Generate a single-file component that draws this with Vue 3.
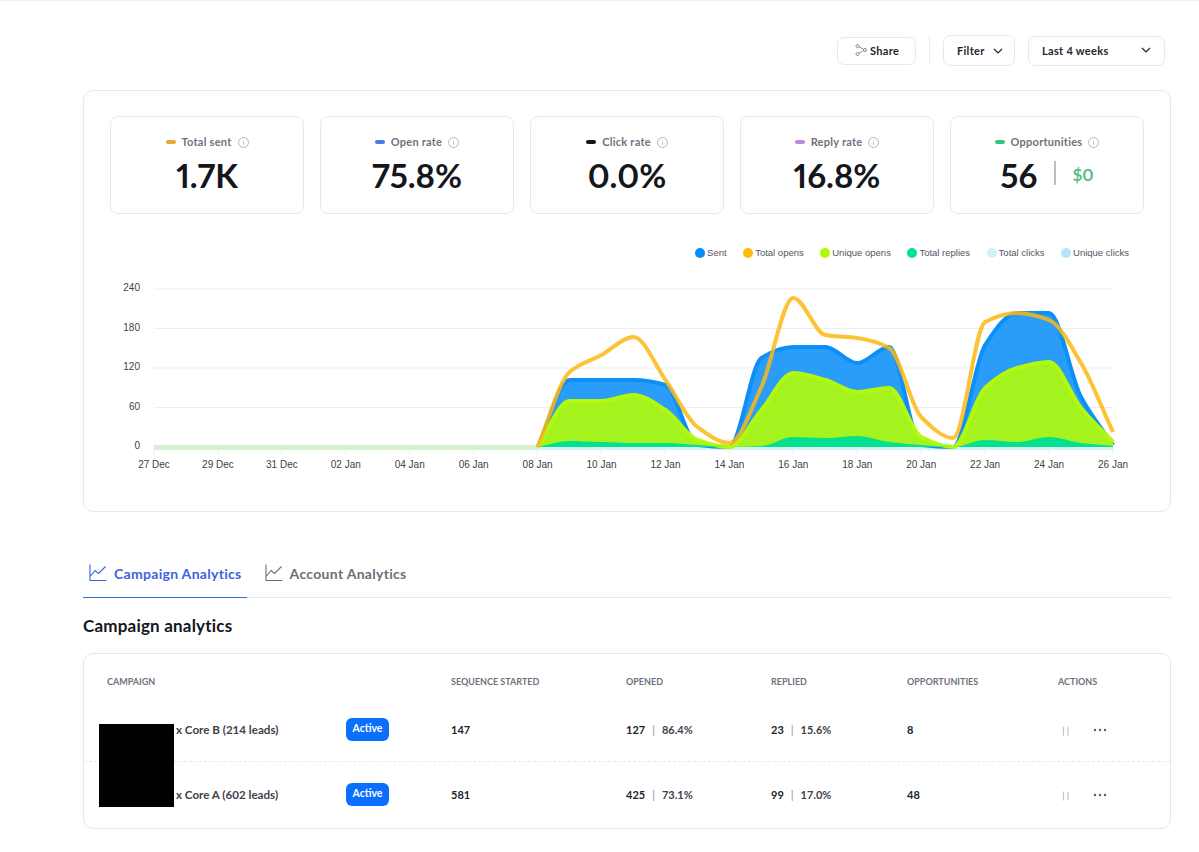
<script setup>
const stats = [
  { label: 'Total sent', value: '1.7K', color: '#e5a93f' },
  { label: 'Open rate', value: '75.8%', color: '#4a7be8' },
  { label: 'Click rate', value: '0.0%', color: '#14161c' },
  { label: 'Reply rate', value: '16.8%', color: '#b98bdc' },
  { label: 'Opportunities', value: '56', color: '#2fc77b', extra: '$0' },
]
const legend = [
  { label: 'Sent', color: '#008ffb' },
  { label: 'Total opens', color: '#feb90f' },
  { label: 'Unique opens', color: '#b0f708' },
  { label: 'Total replies', color: '#00e396' },
  { label: 'Total clicks', color: '#d4f1f9' },
  { label: 'Unique clicks', color: '#b2e8f6' },
]
const rows = [
  { name: 'x Core B (214 leads)', started: '147', opened: '127', openedPct: '86.4%', replied: '23', repliedPct: '15.6%', opp: '8' },
  { name: 'x Core A (602 leads)', started: '581', opened: '425', openedPct: '73.1%', replied: '99', repliedPct: '17.0%', opp: '48' },
]
const x0 = 154
const dx = 959 / 30
const base = 447
const xAt = (d) => x0 + d * dx
const pad = (arr) => arr.map((y, i) => [xAt(i + 12), y])
const sent = pad([447, 380, 380, 380, 385, 445, 447, 358, 347, 347, 363, 347, 445, 447, 345, 313, 313, 397, 445])
const opens = pad([447, 372, 355, 337, 380, 427, 443, 387, 298, 335, 338, 348, 417, 438, 322, 313, 320, 363, 432])
const unique = pad([447, 401, 401, 395, 410, 440, 447, 410, 373, 380, 392, 388, 437, 447, 388, 368, 362, 408, 442])
const replies = pad([447, 441, 442, 443, 443, 445, 447, 446, 437, 438, 436, 442, 445, 447, 440, 442, 437, 443, 446])
// monotone cubic: never overshoots the data
function curve(pts) {
  const n = pts.length
  const s = []
  for (let i = 0; i < n - 1; i++) s.push((pts[i + 1][1] - pts[i][1]) / (pts[i + 1][0] - pts[i][0]))
  const m = pts.map((_, i) => {
    if (i === 0) return s[0]
    if (i === n - 1) return s[n - 2]
    if (s[i - 1] * s[i] <= 0) return 0
    return (2 * s[i - 1] * s[i]) / (s[i - 1] + s[i])
  })
  let d = `M${pts[0][0].toFixed(1)} ${pts[0][1]}`
  for (let i = 0; i < n - 1; i++) {
    const h = (pts[i + 1][0] - pts[i][0]) / 3
    d += `C${(pts[i][0] + h).toFixed(1)} ${(pts[i][1] + m[i] * h).toFixed(1)} ${(pts[i + 1][0] - h).toFixed(1)} ${(pts[i + 1][1] - m[i + 1] * h).toFixed(1)} ${pts[i + 1][0].toFixed(1)} ${pts[i + 1][1]}`
  }
  return d
}
const area = (pts) => `${curve(pts)}L${pts[pts.length - 1][0].toFixed(1)} ${base}L${pts[0][0].toFixed(1)} ${base}Z`
const series = {
  sentLine: curve(sent), sentArea: area(sent),
  uniqueLine: curve(unique), uniqueArea: area(unique),
  repliesArea: area(replies), opensLine: curve(opens),
}
const xLabels = ['27 Dec', '29 Dec', '31 Dec', '02 Jan', '04 Jan', '06 Jan', '08 Jan', '10 Jan', '12 Jan', '14 Jan', '16 Jan', '18 Jan', '20 Jan', '22 Jan', '24 Jan', '26 Jan']
  .map((t, i) => ({ t, x: xAt(i * 2) }))
const yLabels = [['240', 289], ['180', 328.5], ['120', 368], ['60', 407.5], ['0', 447]]
</script>

<template>
  <div class="page">
    <header class="topbar">
      <button class="btn share">
        <svg viewBox="0 0 12 12" width="12" height="12" fill="none" stroke="#6b6f7b" stroke-width=".8">
          <circle cx="2.500" cy="2" r="1.500" /><circle cx="2.500" cy="10" r="1.500" /><circle cx="10" cy="6" r="1.500" />
          <path d="M4 2.800 8.600 5.300M4 9.200 8.600 6.700" />
        </svg>
        Share
      </button>
      <span class="vline"></span>
      <button class="btn filter">
        Filter
        <svg viewBox="0 0 10 6" width="10" height="6" fill="none" stroke="#23252d" stroke-width="1.2"><path d="M1 1l4 4 4-4" /></svg>
      </button>
      <button class="btn range">
        Last 4 weeks
        <svg viewBox="0 0 10 6" width="10" height="6" fill="none" stroke="#23252d" stroke-width="1.2"><path d="M1 1l4 4 4-4" /></svg>
      </button>
    </header>

    <section class="overview">
      <div class="stats">
        <div v-for="s in stats" :key="s.label" class="stat">
          <div class="stat-label">
            <i class="pill" :style="{ background: s.color }"></i>
            <span>{{ s.label }}</span>
            <svg viewBox="0 0 12 12" width="11" height="11" fill="none" stroke="#9a9da6" stroke-width=".8">
              <circle cx="6" cy="6" r="5.400" /><path d="M6 5.400v3M6 3.400v.8" />
            </svg>
          </div>
          <div class="stat-value">
            <span>{{ s.value }}</span>
            <template v-if="s.extra">
              <i class="sep"></i>
              <span class="extra">{{ s.extra }}</span>
            </template>
          </div>
        </div>
      </div>

      <div class="legend">
        <span v-for="l in legend" :key="l.label" class="legend-item">
          <i :style="{ background: l.color }"></i>{{ l.label }}
        </span>
      </div>

      <svg class="chart" viewBox="84 260 1086 251" width="1086" height="251">
        <g stroke="#ecedf0" stroke-width="1">
          <line v-for="y in yLabels" :key="y[0]" :x1="x0" x2="1113" :y1="y[1]" :y2="y[1]" />
          <line v-for="l in xLabels" :key="l.t" :x1="l.x" :x2="l.x" y1="447" y2="455" />
        </g>
        <text v-for="y in yLabels" :key="y[0]" x="140" :y="y[1] + 2" text-anchor="end" class="axis">{{ y[0] }}</text>
        <text v-for="l in xLabels" :key="l.t" :x="l.x" y="468" text-anchor="middle" class="axis">{{ l.t }}</text>
        <rect x="154" y="445" width="384" height="5" fill="#d8efd2" />
        <rect x="538" y="447" width="575" height="3" fill="#d2f2f7" />
        <path :d="series.sentArea" fill="#2a9dfb" />
        <path :d="series.sentLine" fill="none" stroke="#0c90f8" stroke-width="4" />
        <path :d="series.uniqueArea" fill="#a4f31f" />
        <path :d="series.uniqueLine" fill="none" stroke="#b2f90b" stroke-width="4" />
        <path :d="series.repliesArea" fill="#05e08f" />
        <path :d="series.opensLine" fill="none" stroke="#fdb913" stroke-opacity=".85" stroke-width="4" stroke-linejoin="round" />
      </svg>
    </section>

    <nav class="tabs">
      <a class="tab active">
        <svg viewBox="0 0 18 18" width="18" height="18" fill="none" stroke="currentColor" stroke-width="1.100"><path d="M1 .5V16.500H17.500M1.500 12 6 6.500l3.500 3L16.500 2.500" /></svg>
        Campaign Analytics
      </a>
      <a class="tab">
        <svg viewBox="0 0 18 18" width="18" height="18" fill="none" stroke="currentColor" stroke-width="1.100"><path d="M1 .5V16.500H17.500M1.500 12 6 6.500l3.500 3L16.500 2.500" /></svg>
        Account Analytics
      </a>
    </nav>

    <h2 class="title">Campaign analytics</h2>

    <section class="table">
      <div class="thead grid">
        <span>CAMPAIGN</span><span>SEQUENCE STARTED</span><span>OPENED</span><span>REPLIED</span><span>OPPORTUNITIES</span><span>ACTIONS</span>
      </div>
      <div v-for="r in rows" :key="r.name" class="trow grid">
        <div class="namecell">
          <span class="name">{{ r.name }}</span>
          <span class="badge">Active</span>
        </div>
        <span class="num">{{ r.started }}</span>
        <span class="num">{{ r.opened }}<em>|</em><b>{{ r.openedPct }}</b></span>
        <span class="num">{{ r.replied }}<em>|</em><b>{{ r.repliedPct }}</b></span>
        <span class="num">{{ r.opp }}</span>
        <div class="actions">
          <svg class="pause" viewBox="0 0 8 10" width="8" height="10" stroke="#c4c6cc" stroke-width="1.200"><path d="M1.500 .5v9M6 .5v9" /></svg>
          <svg class="dots" viewBox="0 0 14 4" width="14" height="4" fill="#5c5f6a"><circle cx="2" cy="2" r="1.200" /><circle cx="7" cy="2" r="1.200" /><circle cx="12" cy="2" r="1.200" /></svg>
        </div>
      </div>
      <div class="redact"></div>
    </section>
  </div>
</template>

<style>
html, body { margin: 0; background: #fff; overflow: hidden; }
</style>

<style scoped>
.page {
  box-sizing: border-box;
  height: 852px;
  padding: 0 28px 0 83px;
  border-top: 1px solid #f0f0f2;
  font-family: Lato, "Liberation Sans", sans-serif;
  color: #14161c;
}
.topbar {
  display: flex;
  align-items: flex-start;
  justify-content: flex-end;
  box-sizing: border-box;
  height: 89px;
  padding: 34px 6px 0 0;
}
.btn {
  display: flex;
  align-items: center;
  box-sizing: border-box;
  background: #fff;
  border: 1px solid #e9e9ed;
  border-radius: 7px;
  font: 700 11px Lato, "Liberation Sans", sans-serif;
  letter-spacing: .3px;
  color: #23252d;
  padding: 0;
}
.share { width: 79px; height: 28px; padding: 0 0 2px 17px; gap: 3px; margin-top: 2px; }
.vline { width: 1px; height: 30px; background: #eeeef1; margin: 0 13px; }
.filter { width: 72px; height: 31px; padding-left: 13px; gap: 8px; }
.range { width: 137px; height: 30px; padding: 0 13px 2px; margin: 1px 0 0 13px; justify-content: space-between; }
.overview {
  box-sizing: border-box;
  height: 422px;
  border: 1px solid #e8e8ec;
  border-radius: 10px;
  padding: 25px 0 0;
}
.stats { display: flex; gap: 16px; padding: 0 26px; }
.stat {
  box-sizing: border-box;
  width: 194px;
  height: 98px;
  border: 1px solid #e9e9ed;
  border-radius: 8px;
  display: flex;
  flex-direction: column;
  align-items: center;
  padding-top: 18px;
}
.stat-label {
  display: flex;
  align-items: center;
  gap: 6px;
  font-size: 11px;
  font-weight: 700;
  letter-spacing: .25px;
  line-height: 14px;
  color: #6f727e;
}
.pill { width: 10px; height: 4px; border-radius: 2px; }
.stat-value {
  display: flex;
  align-items: center;
  margin-top: 4px;
  font-size: 33px;
  line-height: 44px;
  font-weight: 700;
  font-variant-numeric: proportional-nums;
  color: #14161c;
}
.sep { width: 2px; height: 24px; background: #b9bdc6; margin: 0 16px 4px 17px; }
.extra { font-size: 17px; font-weight: 700; color: #55bd8d; }
.legend {
  display: flex;
  justify-content: flex-end;
  gap: 16.500px;
  height: 14px;
  margin-top: 32px;
  padding-right: 41px;
  font: 9.500px/14px "Liberation Sans", sans-serif;
  color: #53565f;
}
.legend-item { display: flex; align-items: center; gap: 2px; }
.legend-item i { width: 10px; height: 10px; border-radius: 50%; }
.chart { display: block; }
.axis { font: 10px "Liberation Sans", sans-serif; fill: #3c3f48; }
.tabs {
  display: flex;
  height: 44px;
  margin-top: 41px;
  border-bottom: 1px solid #e8e8ec;
}
.tab {
  display: flex;
  align-items: center;
  gap: 7px;
  padding: 0 5px 4px 6px;
  margin-right: 12px;
  font-size: 14px;
  font-weight: 700;
  letter-spacing: .3px;
  color: #6c6f79;
}
.tab.active { color: #3e63dd; border-bottom: 1px solid #2a6fc4; margin-bottom: -1px; }
.title { margin: 18px 0 0; font-size: 17px; line-height: 20px; font-weight: 700; letter-spacing: .2px; color: #14161c; }
.table {
  position: relative;
  box-sizing: border-box;
  height: 176px;
  margin-top: 17px;
  border: 1px solid #e8e8ec;
  border-radius: 10px;
}
.grid {
  display: grid;
  grid-template-columns: 344px 175px 145px 136px 151px 1fr;
  align-items: center;
  padding-left: 23px;
}
.thead { height: 54px; font-size: 9px; font-weight: 700; color: #6f727e; }
.trow { box-sizing: border-box; height: 65px; font-size: 11px; font-weight: 700; color: #23252d; }
.trow:nth-child(2) { height: 54px; padding-bottom: 10px; border-bottom: 1px dashed #e8e8ec; }
.namecell { display: flex; align-items: center; }
.name { width: 170px; margin-left: 69px; font-size: 11.600px; color: #3f414b; }
.badge {
  box-sizing: border-box;
  width: 43px;
  height: 23px;
  margin-top: -1px;
  border-radius: 6px;
  background: #0b6ffd;
  color: #fff;
  font-size: 10.500px;
  line-height: 21px;
  text-align: center;
}
.num em { font-style: normal; font-weight: 400; color: #8a8d96; margin: 0 7px; }
.num b { font-weight: 700; color: #3f414b; }
.actions { display: flex; align-items: center; gap: 23px; padding-left: 4px; }
.pause { margin-top: 2px; }
.dots { margin-top: 0; }
.redact {
  position: absolute;
  left: 15px;
  top: 70px;
  width: 75px;
  height: 83px;
  background: #000;
}
</style>
